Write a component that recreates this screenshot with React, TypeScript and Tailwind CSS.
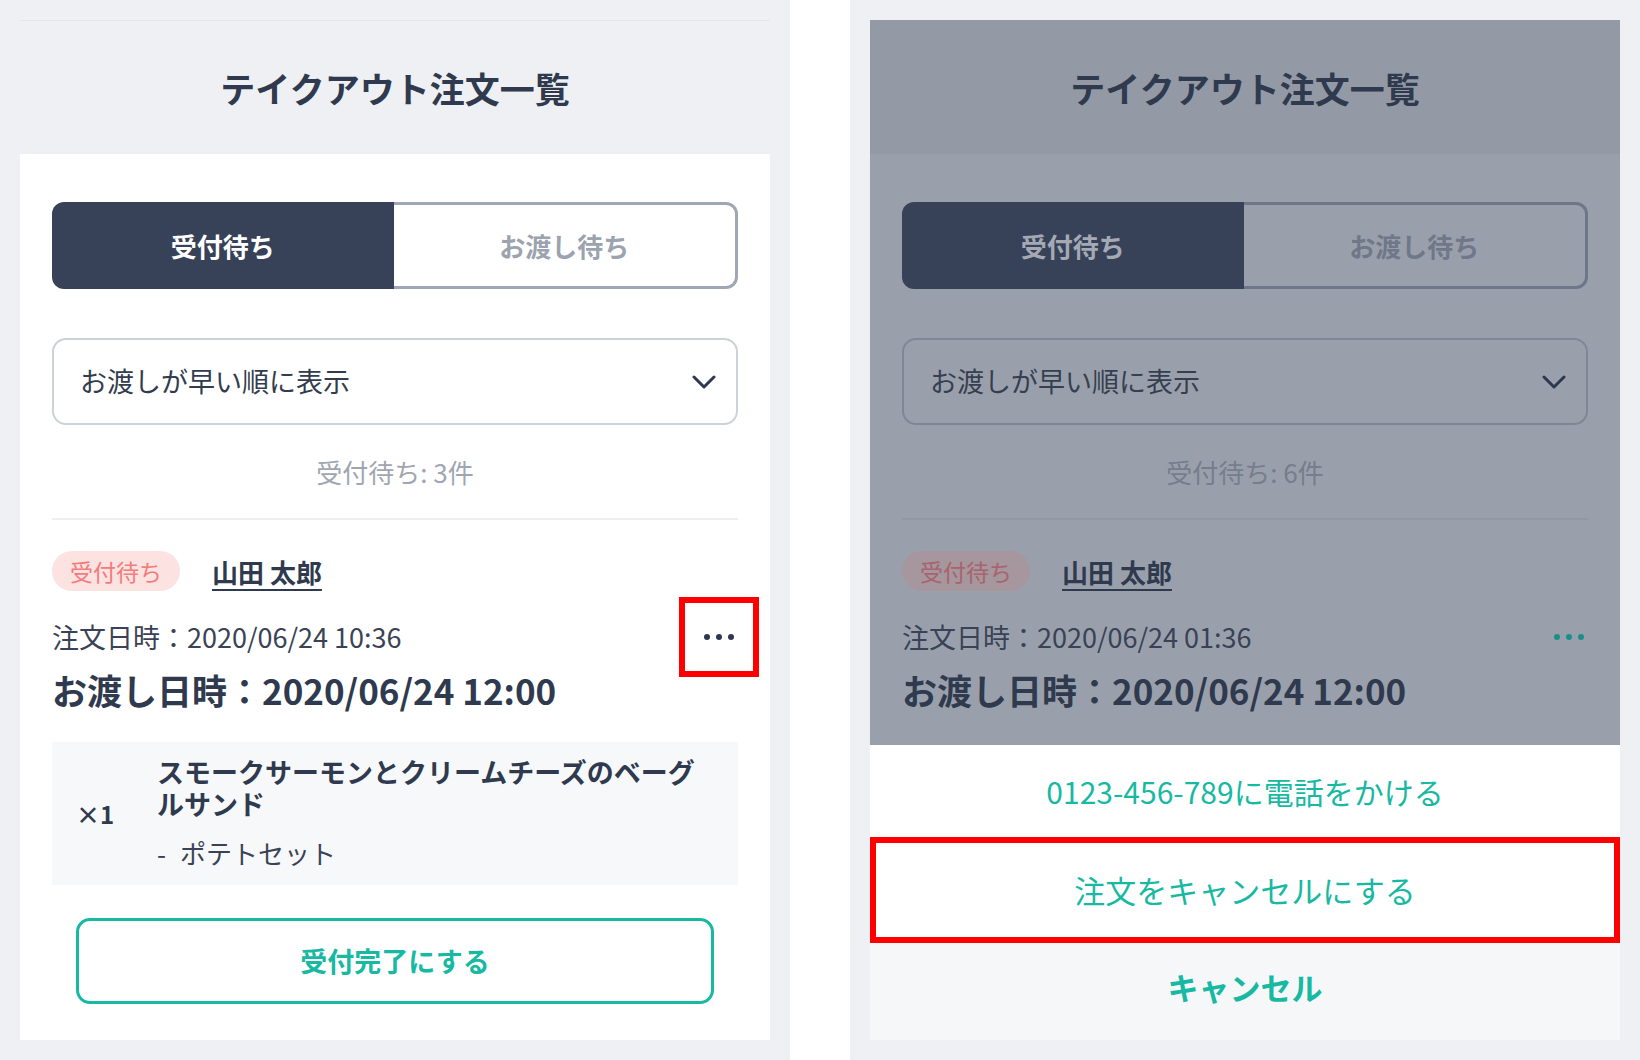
import type { ReactNode } from 'react'

const FONT = "font-['Noto_Sans_CJK_JP','Noto_Sans',sans-serif]"

function Dots({ dim }: { dim: boolean }) {
  const dot = dim ? 'bg-[#1a8f89]' : 'bg-[#2d3850]'
  return (
    <span className="flex items-center gap-[6px]">
      <span className={`size-[6px] rounded-full ${dot}`} />
      <span className={`size-[6px] rounded-full ${dot}`} />
      <span className={`size-[6px] rounded-full ${dot}`} />
    </span>
  )
}

function Chevron({ color }: { color: string }) {
  return (
    <svg width="24" height="14" viewBox="0 0 24 14" fill="none" aria-hidden="true">
      <path d="M2 2l10 10L22 2" stroke={color} strokeWidth="3" strokeLinecap="round" strokeLinejoin="round" />
    </svg>
  )
}

/** One phone screen of the takeout order list. `dim` = the state with the action sheet open. */
function OrderScreen({ dim, count, orderedAt, sheet }: { dim: boolean; count: number; orderedAt: string; sheet?: ReactNode }) {
  return (
    <div className="relative flex h-[1020px] w-[750px] flex-col overflow-hidden">
      <header
        className={`flex h-[134px] shrink-0 items-center justify-center border-t ${dim ? 'border-transparent bg-[#949aa5]' : 'border-[#e3e5e9] bg-[#eff0f3]'}`}
      >
        <h1 className="text-[35px] font-bold leading-none text-[#2f3a4f]">テイクアウト注文一覧</h1>
      </header>

      <main className={`flex flex-1 flex-col px-[32px] pt-[48px] ${dim ? 'bg-[#9aa0ab]' : 'bg-white'}`}>
        {/* tabs */}
        <div className="flex h-[87px]">
          <div
            className={`flex flex-1 items-center justify-center rounded-l-[12px] bg-[#374259] text-[26px] font-bold ${dim ? 'text-[#a4a9b4]' : 'text-white'}`}
          >
            受付待ち
          </div>
          <div
            className={`flex flex-1 items-center justify-center rounded-r-[12px] border-[3px] border-l-0 text-[26px] font-bold ${dim ? 'border-[#6e7689] text-[#6f7788]' : 'border-[#a0a7b4] text-[#9ca3af]'}`}
          >
            お渡し待ち
          </div>
        </div>

        {/* sort select */}
        <div
          className={`mt-[49px] flex h-[87px] items-center justify-between rounded-[14px] border-2 pl-[26px] pr-[20px] ${dim ? 'border-[#7f8696]' : 'border-[#cdd1d8]'}`}
        >
          <span className={`text-[27px] ${dim ? 'text-[#363f50]' : 'text-[#323c4e]'}`}>お渡しが早い順に表示</span>
          <Chevron color="#2d3850" />
        </div>

        <div className={`flex h-[93px] items-center justify-center text-[26px] ${dim ? 'text-[#767d8b]' : 'text-[#a0a6b1]'}`}>
          受付待ち: {count}件
        </div>
        <div className={`h-[2px] ${dim ? 'bg-[#9297a2]' : 'bg-[#eceef1]'}`} />

        {/* order card */}
        <div className="mt-[31px] flex h-[40px] items-center gap-[32px]">
          <span
            className={`flex h-[40px] w-[128px] items-center justify-center rounded-full text-[23px] ${dim ? 'bg-[#a6969d] text-[#a9636e]' : 'bg-[#fde2e2] text-[#f27b7b]'}`}
          >
            受付待ち
          </span>
          <span className="text-[26px] font-bold text-[#2f3a4f] underline decoration-2 underline-offset-[6px]">山田 太郎</span>
        </div>

        <div className="mt-[28px] flex h-[36px] items-center justify-between pr-[4px]">
          <span className={`text-[27px] ${dim ? 'text-[#394256]' : 'text-[#3a4356]'}`}>注文日時：{orderedAt}</span>
          <span className="relative flex items-center">
            <Dots dim={dim} />
            {!dim && (
              <span className="pointer-events-none absolute left-1/2 top-1/2 size-[80px] -translate-x-1/2 -translate-y-1/2 border-[6px] border-[#ff0000]" />
            )}
          </span>
        </div>

        <div className="mt-[13px] text-[35px] font-bold leading-[44px] text-[#2f3a4f]">お渡し日時：2020/06/24 12:00</div>

        {!dim && (
          <>
            <div className="mt-[30px] flex h-[143px] items-center bg-[#f7f8fa] pl-[24px]">
              <span className="w-[81px] text-[24px] font-bold text-[#2f3a4f]">×1</span>
              <div className="w-[560px]">
                <p className="text-[27px] font-bold leading-[32px] text-[#2f3a4f]">スモークサーモンとクリームチーズのベーグルサンド</p>
                <p className="mt-[15px] flex gap-[14px] text-[26px] leading-[36px] text-[#3a4356]">
                  <span>-</span>
                  <span>ポテトセット</span>
                </p>
              </div>
            </div>

            <button className="mx-[24px] mt-[33px] flex h-[86px] items-center justify-center rounded-[14px] border-[3px] border-[#17b9a2] text-[27px] font-bold text-[#17b9a2]">
              受付完了にする
            </button>
          </>
        )}
      </main>

      {sheet}
    </div>
  )
}

function ActionSheet() {
  return (
    <div className="absolute inset-x-0 bottom-0 flex h-[295px] flex-col bg-white">
      <div className="flex h-[92px] items-center justify-center text-[30px] text-[#17b9a2]">0123-456-789に電話をかける</div>
      <div className="flex h-[106px] items-center justify-center border-[6px] border-[#ff0000] text-[31px] text-[#17b9a2]">
        注文をキャンセルにする
      </div>
      <div className="flex flex-1 items-center justify-center bg-[#f6f7f9] pb-[8px] text-[31px] font-bold text-[#17b9a2]">キャンセル</div>
    </div>
  )
}

export default function App() {
  return (
    <div className={`flex h-[1060px] w-[1640px] gap-[60px] bg-white ${FONT}`}>
      <section className="h-full w-[790px] bg-[#eff0f3] pl-[20px] pt-[20px]">
        <OrderScreen dim={false} count={3} orderedAt="2020/06/24 10:36" />
      </section>
      <section className="h-full w-[790px] bg-[#eff0f3] pl-[20px] pt-[20px]">
        <OrderScreen dim count={6} orderedAt="2020/06/24 01:36" sheet={<ActionSheet />} />
      </section>
    </div>
  )
}
